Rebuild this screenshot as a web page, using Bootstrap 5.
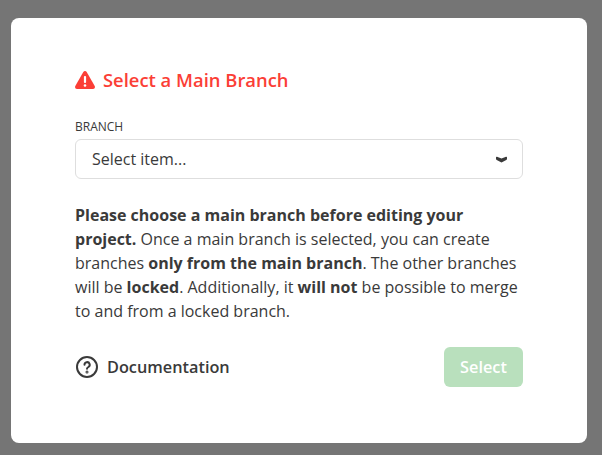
<!DOCTYPE html>
<html lang="en">
<head>
    <meta charset="UTF-8">
    <title>Select a Main Branch</title>
    <link href="https://cdn.jsdelivr.net/npm/bootstrap@5.3.0/dist/css/bootstrap.min.css" rel="stylesheet">
    <script src="https://cdn.jsdelivr.net/npm/bootstrap@5.3.0/dist/js/bootstrap.bundle.min.js"></script>
    <style>
        html, body { height: 100%; }
        body {
            background: #757575;
            font-family: "Open Sans", "Noto Sans", sans-serif;
            color: #3a3a3a;
            overflow: hidden;
        }
        .dialog-box {
            width: 576px;
            height: 425px;
            margin: 18px 0 0 11px;
            padding: 49px 64px 0;
            background: #fff;
            border-radius: 8px;
        }
        .dialog-title {
            font-size: 18.4px;
            font-weight: 600;
            line-height: 26px;
            color: #fb3e36;
            margin: 0;
        }
        .field-label {
            font-size: 12px;
            line-height: 16px;
            margin: 26px 0 4px;
        }
        .branch-select {
            height: 40px;
            font-size: 16px;
            color: #3a3a3a;
            padding: 0 15px 0 16px;
            border: 1px solid #dedede;
            border-radius: 6px;
        }
        .dialog-text {
            font-size: 16px;
            line-height: 24px;
            margin: 24px 0 0;
        }
        .dialog-text b { font-weight: 700; }
        .doc-link {
            font-size: 16.3px;
            font-weight: 600;
            color: #3a3a3a;
            text-decoration: none;
        }
        .select-btn {
            width: 79px;
            height: 40px;
            font-size: 16.3px;
            font-weight: 600;
            color: #fff;
            background: #b9e0bd;
            border: 0;
            border-radius: 6px;
        }
    </style>
</head>
<body>
    <div class="dialog-box">
        <h5 class="dialog-title d-flex align-items-center gap-2">
            <svg width="20" height="18" viewBox="0 0 20 18"><path fill="#fb3e36" d="M10 0c-.7 0-1.300.4-1.700 1L.3 15c-.7 1.300.2 3 1.700 3h16c1.500 0 2.400-1.700 1.700-3l-8-14c-.4-.6-1-1-1.700-1z"/><rect x="8.900" y="5" width="2.200" height="7" rx="1" fill="#fff"/><circle cx="10" cy="14.500" r="1.300" fill="#fff"/></svg>
            Select a Main Branch
        </h5>
        <div class="field-label">BRANCH</div>
        <div class="branch-select d-flex align-items-center justify-content-between">
            <span>Select item...</span>
            <svg width="11" height="7" viewBox="0 0 11 7"><path d="M0 1.500Q0 .5 1 .8L5.500 2.600 10 .8Q11 .5 11 1.500V2.800Q11 3.500 10.300 3.900L6 6.300Q5.500 6.600 5 6.300L.7 3.900Q0 3.500 0 2.800z" fill="#3a3a3a"/></svg>
        </div>
        <p class="dialog-text"><b>Please choose a main branch before editing your project.</b> Once a main branch is selected, you can create branches <b>only from the main branch</b>. The other branches will be <b>locked</b>. Additionally, it <b>will not</b> be possible to merge to and from a locked branch.</p>
        <div class="d-flex align-items-center justify-content-between mt-4">
            <a class="doc-link d-flex align-items-center gap-2" href="#">
                <svg width="24" height="24" viewBox="0 0 24 24" fill="none" stroke="#3a3a3a" stroke-width="2"><circle cx="12" cy="12" r="10"/><path stroke-linecap="round" d="M9.500 9.800a2.600 2.600 0 1 1 3.900 2.200c-.9.500-1.400 1-1.400 1.800"/><circle cx="12" cy="17" r=".5"/></svg>
                Documentation
            </a>
            <button class="select-btn" type="button" disabled>Select</button>
        </div>
    </div>
</body>
</html>
